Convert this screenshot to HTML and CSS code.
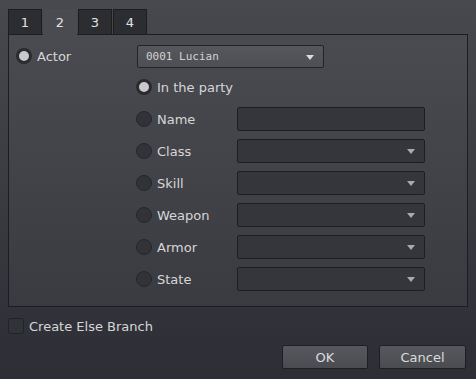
FILE: index.html
```html
<!DOCTYPE html>
<html lang="en">
<head>
  <meta charset="UTF-8" />
  <title>Conditional Branch</title>
  <link rel="stylesheet" href="styles.css">
</head>
<body>
  <div class="dialog">
    <div class="tabs">
      <div class="tab">1</div>
      <div class="tab ativo">2</div>
      <div class="tab">3</div>
      <div class="tab">4</div>
    </div>

    <div class="painel">
      <div class="linha linha-actor">
        <span class="radio marcado"></span>
        <span class="rotulo rotulo-actor">Actor</span>
        <div class="combo combo-actor">
          <span class="combo-texto">0001 Lucian</span>
          <span class="seta"></span>
        </div>
      </div>

      <div class="linha sub">
        <span class="radio marcado"></span>
        <span class="rotulo">In the party</span>
      </div>

      <div class="linha sub">
        <span class="radio"></span>
        <span class="rotulo">Name</span>
        <div class="campo"></div>
      </div>

      <div class="linha sub">
        <span class="radio"></span>
        <span class="rotulo">Class</span>
        <div class="campo combo"><span class="seta apagada"></span></div>
      </div>

      <div class="linha sub">
        <span class="radio"></span>
        <span class="rotulo">Skill</span>
        <div class="campo combo"><span class="seta apagada"></span></div>
      </div>

      <div class="linha sub">
        <span class="radio"></span>
        <span class="rotulo">Weapon</span>
        <div class="campo combo"><span class="seta apagada"></span></div>
      </div>

      <div class="linha sub">
        <span class="radio"></span>
        <span class="rotulo">Armor</span>
        <div class="campo combo"><span class="seta apagada"></span></div>
      </div>

      <div class="linha sub">
        <span class="radio"></span>
        <span class="rotulo">State</span>
        <div class="campo combo"><span class="seta apagada"></span></div>
      </div>
    </div>

    <label class="else">
      <span class="checkbox"></span>
      <span>Create Else Branch</span>
    </label>

    <div class="botoes">
      <button class="botao">OK</button>
      <button class="botao cancelar">Cancel</button>
    </div>
  </div>
</body>
</html>
```

FILE: styles.css
```css
body {
  margin: 0;
  width: 476px;
  height: 379px;
  overflow: hidden;
  font-family: 'DejaVu Sans', sans-serif;
  font-size: 12px;
  color: #d6d6d8;
  background: linear-gradient(to bottom, #48494e, #2d2e35);
}

.dialog {
  padding: 9px 8px 0 8px;
}

.tabs {
  display: flex;
  height: 25px;
}

.tab {
  width: 34px;
  height: 25px;
  margin-right: 1px;
  display: flex;
  align-items: center;
  justify-content: center;
  background: #2c2d31;
  border: 1px solid #1c1d20;
  border-bottom: none;
  box-sizing: border-box;
  color: #e2e2e4;
  font-size: 13px;
}

.tab.ativo {
  background: #4a4b50;
  border-color: #4a4b50;
  height: 26px;
  position: relative;
  z-index: 1;
}

.painel {
  width: 460px;
  height: 273px;
  box-sizing: border-box;
  border: 1px solid #1c1d20;
  background: linear-gradient(to bottom, #4a4b50, #3a3b41);
  padding: 6px 0 0 7px;
}

.linha {
  display: flex;
  align-items: center;
  height: 32px;
}

.linha-actor {
  height: 30px;
}

.sub {
  padding-left: 120px;
}

.radio {
  width: 16px;
  height: 16px;
  border-radius: 50%;
  box-sizing: border-box;
  background: #323338;
  border: 1px solid #26272b;
  flex-shrink: 0;
}

.radio.marcado {
  background: #c9c9cb;
  border: 3px solid #2a2b2f;
}

.rotulo {
  margin-left: 5px;
  width: 80px;
  font-size: 13px;
}

.rotulo-actor {
  width: 100px;
}

.combo {
  position: relative;
  display: flex;
  align-items: center;
}

.combo-actor {
  width: 187px;
  height: 23px;
  box-sizing: border-box;
  background: linear-gradient(to bottom, #56575c, #4e4f54);
  border: 1px solid #232428;
  border-radius: 2px;
  padding-left: 8px;
}

.combo-texto {
  font-family: 'DejaVu Sans Mono', monospace;
  font-size: 11px;
  color: #d2d2d4;
}

.campo {
  width: 188px;
  height: 24px;
  box-sizing: border-box;
  background: #35363b;
  border: 1px solid #1d1e21;
  border-radius: 2px;
}

.seta {
  position: absolute;
  right: 9px;
  top: 9px;
  width: 0;
  height: 0;
  border-left: 4px solid transparent;
  border-right: 4px solid transparent;
  border-top: 5px solid #dcdcde;
}

.seta.apagada {
  border-top-color: #a9a9ad;
}

.else {
  display: flex;
  align-items: center;
  margin-top: 11px;
  height: 16px;
  font-size: 13px;
}

.checkbox {
  width: 16px;
  height: 16px;
  box-sizing: border-box;
  background: #323338;
  border: 1px solid #232428;
  border-radius: 2px;
  margin-right: 5px;
}

.botoes {
  display: flex;
  justify-content: flex-end;
  gap: 11px;
  margin-top: 11px;
  padding-right: 2px;
}

.botao {
  width: 86px;
  height: 24px;
  background: linear-gradient(to bottom, #57585d, #4b4c51);
  border: 1px solid #1e1f23;
  border-radius: 2px;
  color: #dcdcde;
  font-family: 'DejaVu Sans', sans-serif;
  font-size: 13px;
  padding: 0;
}

.botao.cancelar {
  width: 87px;
}
```
